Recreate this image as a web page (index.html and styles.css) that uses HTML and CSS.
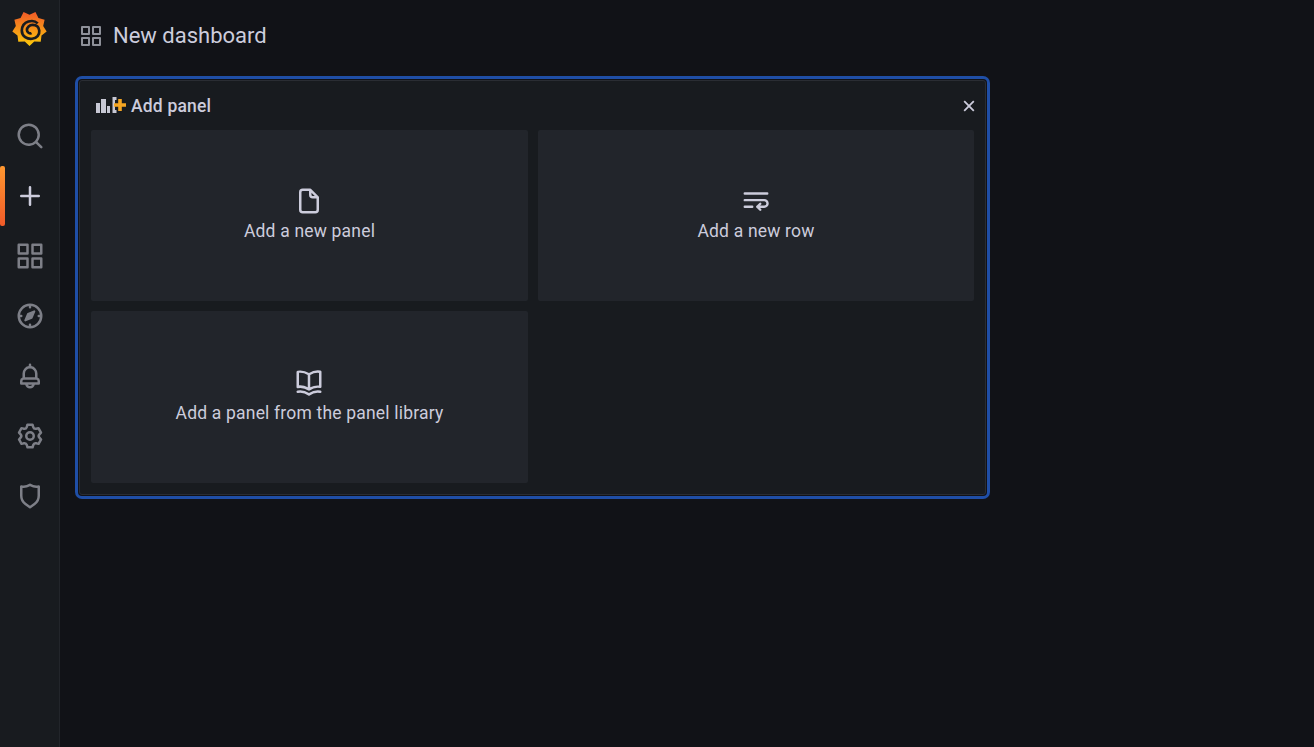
FILE: index.html
```html
<!DOCTYPE html>
<html lang="en">
<head>
<meta charset="utf-8">
<title>New dashboard</title>
<link rel="stylesheet" href="styles.css">
</head>
<body>
<div class="app">
  <nav class="sidebar">
    <div class="logo-wrap">
      <svg class="logo" viewBox="-18 -18 36 36" width="37" height="37">
        <defs><linearGradient id="lg" x1="0" y1="0" x2="0" y2="1"><stop offset="0" stop-color="#f05a28"/><stop offset="1" stop-color="#fbca0a"/></linearGradient></defs>
        <polygon fill="url(#lg)" points="16.7,2.95 11.7,6.75 10.9,13 4.6,12.7 0,17 -4.6,12.7 -10.9,13 -11.7,6.75 -16.7,2.95 -13.3,-2.34 -14.7,-8.5 -8.7,-10.3 -5.8,-16 0,-13.5 5.8,-16 8.7,-10.3 14.7,-8.5 13.3,-2.34"/>
        <path fill="none" stroke="#181b1f" stroke-width="2.6" d="M8,-5 C4,-9 -7,-8 -7.5,2 C-7.5,8 -2,10.5 2.5,10 C7,9.5 10,6 9.5,2 C9,-2 6,-3.5 3,-3.5 C0,-3.5 -2.5,-1 -2.5,1.5 C-2.5,3.5 0,5.5 2,4.5"/>
      </svg>
    </div>
    <a class="nav-item"><svg class="icon" viewBox="0 0 24 24"><path d="M21.71,20.29,18,16.61A9,9,0,1,0,16.61,18l3.68,3.68a1,1,0,0,0,1.42,0A1,1,0,0,0,21.71,20.29ZM11,18a7,7,0,1,1,7-7A7,7,0,0,1,11,18Z"/></svg></a>
    <a class="nav-item active"><svg class="icon" viewBox="0 0 24 24"><path d="M19,11H13V5a1,1,0,0,0-2,0v6H5a1,1,0,0,0,0,2h6v6a1,1,0,0,0,2,0V13h6a1,1,0,0,0,0-2Z"/></svg></a>
    <a class="nav-item"><svg class="icon" viewBox="0 0 24 24"><path d="M10,13H3a1,1,0,0,0-1,1v7a1,1,0,0,0,1,1h7a1,1,0,0,0,1-1V14A1,1,0,0,0,10,13ZM9,20H4V15H9ZM21,2H14a1,1,0,0,0-1,1v7a1,1,0,0,0,1,1h7a1,1,0,0,0,1-1V3A1,1,0,0,0,21,2ZM20,9H15V4h5Zm1,4H14a1,1,0,0,0-1,1v7a1,1,0,0,0,1,1h7a1,1,0,0,0,1-1V14A1,1,0,0,0,21,13Zm-1,7H15V15h5ZM10,2H3A1,1,0,0,0,2,3v7a1,1,0,0,0,1,1h7a1,1,0,0,0,1-1V3A1,1,0,0,0,10,2ZM9,9H4V4H9Z"/></svg></a>
    <a class="nav-item"><svg class="icon" viewBox="0 0 24 24"><path d="M12,2A10,10,0,1,0,22,12,10,10,0,0,0,12,2Zm1,17.93V19a1,1,0,0,0-2,0v.93A8,8,0,0,1,4.07,13H5a1,1,0,0,0,0-2H4.07A8,8,0,0,1,11,4.07V5a1,1,0,0,0,2,0V4.07A8,8,0,0,1,19.93,11H19a1,1,0,0,0,0,2h.93A8,8,0,0,1,13,19.93ZM15.14,7.55l-5,2.12a1,1,0,0,0-.52.52l-2.12,5a.8.8,0,0,0,1.05,1.05l5-2.12a1,1,0,0,0,.52-.52l2.12-5A.8.8,0,0,0,15.14,7.55Z"/></svg></a>
    <a class="nav-item"><svg class="icon" viewBox="0 0 24 24"><path d="M18,13.18V10a6,6,0,0,0-5-5.91V3a1,1,0,0,0-2,0V4.09A6,6,0,0,0,6,10v3.18A3,3,0,0,0,4,16v2a1,1,0,0,0,1,1H8.14a4,4,0,0,0,7.72,0H19a1,1,0,0,0,1-1V16A3,3,0,0,0,18,13.18ZM8,10a4,4,0,0,1,8,0v3H8Zm4,10a2,2,0,0,1-1.72-1h3.44A2,2,0,0,1,12,20Zm6-3H6V16a1,1,0,0,1,1-1H17a1,1,0,0,1,1,1Z"/></svg></a>
    <a class="nav-item"><svg class="icon" viewBox="0 0 24 24"><path transform="translate(.36 0)" d="M19.9,12.66a1,1,0,0,1,0-1.32L21.18,9.9a1,1,0,0,0,.12-1.17l-2-3.46a1,1,0,0,0-1.07-.48l-1.88.38a1,1,0,0,1-1.15-.66l-.61-1.83A1,1,0,0,0,13.64,2h-4a1,1,0,0,0-1,.68L8.08,4.51a1,1,0,0,1-1.15.66L5,4.79A1,1,0,0,0,4,5.27L2,8.73A1,1,0,0,0,2.1,9.9l1.27,1.44a1,1,0,0,1,0,1.32L2.1,14.1A1,1,0,0,0,2,15.27l2,3.46a1,1,0,0,0,1.07.48l1.88-.38a1,1,0,0,1,1.15.66l.61,1.83a1,1,0,0,0,1,.68h4a1,1,0,0,0,.95-.68l.61-1.83a1,1,0,0,1,1.15-.66l1.88.38a1,1,0,0,0,1.07-.48l2-3.46a1,1,0,0,0-.12-1.17ZM18.41,14l.8.9-1.28,2.22-1.18-.24a3,3,0,0,0-3.45,2L12.92,20H10.36L10,18.86a3,3,0,0,0-3.45-2l-1.18.24L4.07,14.89l.8-.9a3,3,0,0,0,0-4l-.8-.9L5.35,6.89l1.18.24a3,3,0,0,0,3.45-2L10.36,4h2.56l.38,1.14a3,3,0,0,0,3.45,2l1.18-.24,1.28,2.22-.8.9A3,3,0,0,0,18.41,14ZM11.64,8a4,4,0,1,0,4,4A4,4,0,0,0,11.64,8Zm0,6a2,2,0,1,1,2-2A2,2,0,0,1,11.64,14Z"/></svg></a>
    <a class="nav-item"><svg class="icon" viewBox="0 0 24 24"><path d="M19.63,3.65a1,1,0,0,0-.84-.2,8,8,0,0,1-6.22-1.27,1,1,0,0,0-1.14,0A8,8,0,0,1,5.21,3.45a1,1,0,0,0-.84.2A1,1,0,0,0,4,4.43v7.45a9,9,0,0,0,3.77,7.33l3.65,2.6a1,1,0,0,0,1.16,0l3.65-2.6A9,9,0,0,0,20,11.88V4.43A1,1,0,0,0,19.63,3.65ZM18,11.88a7,7,0,0,1-2.93,5.7L12,19.77,8.93,17.58A7,7,0,0,1,6,11.88V5.58a10,10,0,0,0,6-1.39,10,10,0,0,0,6,1.39Z"/></svg></a>
  </nav>
  <main class="main">
    <header class="topbar">
      <svg class="icon title-icon" viewBox="0 0 24 24"><path d="M10,13H3a1,1,0,0,0-1,1v7a1,1,0,0,0,1,1h7a1,1,0,0,0,1-1V14A1,1,0,0,0,10,13ZM9,20H4V15H9ZM21,2H14a1,1,0,0,0-1,1v7a1,1,0,0,0,1,1h7a1,1,0,0,0,1-1V3A1,1,0,0,0,21,2ZM20,9H15V4h5Zm1,4H14a1,1,0,0,0-1,1v7a1,1,0,0,0,1,1h7a1,1,0,0,0,1-1V14A1,1,0,0,0,21,13Zm-1,7H15V15h5ZM10,2H3A1,1,0,0,0,2,3v7a1,1,0,0,0,1,1h7a1,1,0,0,0,1-1V3A1,1,0,0,0,10,2ZM9,9H4V4H9Z"/></svg>
      <h1 class="title">New dashboard</h1>
    </header>
    <section class="panel">
      <div class="panel-head">
        <svg class="add-icon" viewBox="0 0 30 18" width="30" height="18">
          <rect class="bar" x="0" y="6" width="4" height="10"/>
          <rect class="bar" x="5" y="2" width="5" height="14"/>
          <rect class="bar" x="11" y="9" width="3" height="7"/>
          <path class="bar" d="M16.5 0h4v3h-1.5v10h1.5v3h-4z"/>
          <path class="plus" d="M22.2 2h3.6v4.2H30v3.6h-4.2V14h-3.6V9.8H18V6.2h4.2z"/>
        </svg>
        <span class="panel-title">Add panel</span>
        <svg class="close" viewBox="0 0 12 12" width="12" height="12"><path d="M1.2 1.2l9.6 9.6M10.8 1.2l-9.6 9.6"/></svg>
      </div>
      <div class="cards">
        <a class="card">
          <svg class="icon card-icon" viewBox="0 0 24 24"><path d="M20,8.94a1.31,1.31,0,0,0-.06-.27l0-.09a1.07,1.07,0,0,0-.19-.28h0l-6-6h0a1.07,1.07,0,0,0-.28-.19.32.32,0,0,0-.09,0A.88.88,0,0,0,13.05,2H7A3,3,0,0,0,4,5V19a3,3,0,0,0,3,3H17a3,3,0,0,0,3-3V9S20,9,20,8.94ZM14,5.41,16.59,8H15a1,1,0,0,1-1-1ZM18,19a1,1,0,0,1-1,1H7a1,1,0,0,1-1-1V5A1,1,0,0,1,7,4h5V7a3,3,0,0,0,3,3h3Z"/></svg>
          <span>Add a new panel</span>
        </a>
        <a class="card">
          <svg class="icon card-line-icon" viewBox="0 0 24 24"><path d="M3 6H21M3 11.3H18.6a2.65,2.65,0,0,1,0,5.3H13M15.4 14.2L13 16.6L15.4 19M3 16.6H9"/></svg>
          <span>Add a new row</span>
        </a>
        <a class="card">
          <svg class="icon card-icon" viewBox="0 0 24 24"><path d="M21.17,2.06A13.1,13.1,0,0,0,19,1.87a12.94,12.94,0,0,0-7,2.05,12.94,12.94,0,0,0-7-2,13.1,13.1,0,0,0-2.17.19,1,1,0,0,0-.83,1v12a1,1,0,0,0,1.17,1,10.9,10.9,0,0,1,8.25,1.91l.12.07.11,0a.91.91,0,0,0,.7,0l.11,0,.12-.07A10.9,10.9,0,0,1,20.83,16.06a1,1,0,0,0,1.17-1v-12A1,1,0,0,0,21.17,2.06ZM11,15.35a12.87,12.87,0,0,0-6-1.48c-.33,0-.66,0-1,0v-10a8.69,8.69,0,0,1,1,0,10.86,10.86,0,0,1,6,1.8Zm9-1.44c-.34,0-.67,0-1,0a12.87,12.87,0,0,0-6,1.48V5.67a10.86,10.86,0,0,1,6-1.8,8.69,8.69,0,0,1,1,.05Zm1.17,4.15A13.1,13.1,0,0,0,19,17.87a12.94,12.94,0,0,0-7,2.05,12.94,12.94,0,0,0-7-2.05,13.1,13.1,0,0,0-2.17.19A1,1,0,0,0,2,19.21,1,1,0,0,0,3.17,20a10.9,10.9,0,0,1,8.25,1.91,1,1,0,0,0,1.16,0A10.9,10.9,0,0,1,20.83,20,1,1,0,0,0,22,19.21,1,1,0,0,0,21.17,18.06Z"/></svg>
          <span>Add a panel from the panel library</span>
        </a>
      </div>
    </section>
  </main>
</div>
</body>
</html>
```
FILE: styles.css
```css
* { box-sizing: border-box; }
html, body { margin: 0; height: 100%; overflow: hidden; }
body { background: #111217; color: #ccccdc; font-family: Roboto, "Liberation Sans", sans-serif; font-size: 17.5px; letter-spacing: 0.01071em; }
.app { display: flex; height: 747px; }
.sidebar { width: 60px; flex: none; background: #181b1f; border-right: 1px solid #22252a; display: flex; flex-direction: column; }
.logo-wrap { height: 106px; padding-top: 10px; display: flex; justify-content: center; align-items: flex-start; }
.logo { display: block; }
.nav-item { height: 60px; display: flex; align-items: center; justify-content: center; position: relative; }
.icon { width: 30px; height: 30px; fill: #7d7f87; display: block; }
.nav-item.active .icon { fill: #ccccdc; }
.nav-item.active::before { content: ""; position: absolute; left: 0; top: 0; bottom: 0; width: 5px; border-radius: 2px; background: linear-gradient(180deg, #ff9830, #f05a28); }
.main { flex: 1; min-width: 0; padding: 0 0 0 19px; }
.topbar { height: 70px; padding-top: 2px; display: flex; align-items: center; gap: 10px; }
.title-icon { fill: #8e9099; width: 24px; height: 24px; }
.title { margin: 0; font-size: 22px; font-weight: 400; line-height: 30px; letter-spacing: 0; color: #ccccdc; }
.panel { margin-top: 10px; width: 907px; height: 415px; background: #181b1f; border: 1px solid #2a2d33; border-radius: 3px; box-shadow: 0 0 0 1px #111217, 0 0 0 4px #1f4ea6; }
.panel-head { height: 49px; display: flex; align-items: center; padding: 0 10px 0 16px; gap: 5px; }
.add-icon { flex: none; display: block; }
.bar { fill: #c7c8d4; }
.plus { fill: #f5a623; }
.panel-title { font-weight: 500; color: #ccccdc; flex: 1; }
.close { fill: none; stroke: #ccccdc; stroke-width: 1.8; }
.cards { display: grid; grid-template-columns: 437px 436px; grid-template-rows: 171px 172px; gap: 10px; padding: 0 11px; }
.card { background: #22252b; border-radius: 2px; display: flex; flex-direction: column; align-items: center; justify-content: center; gap: 5px; padding-bottom: 4px; }
.card-icon { fill: #ccccdc; margin-right: 2px; }
.card-line-icon { fill: none; stroke: #ccccdc; stroke-width: 1.9; stroke-linecap: round; stroke-linejoin: round; }
```
